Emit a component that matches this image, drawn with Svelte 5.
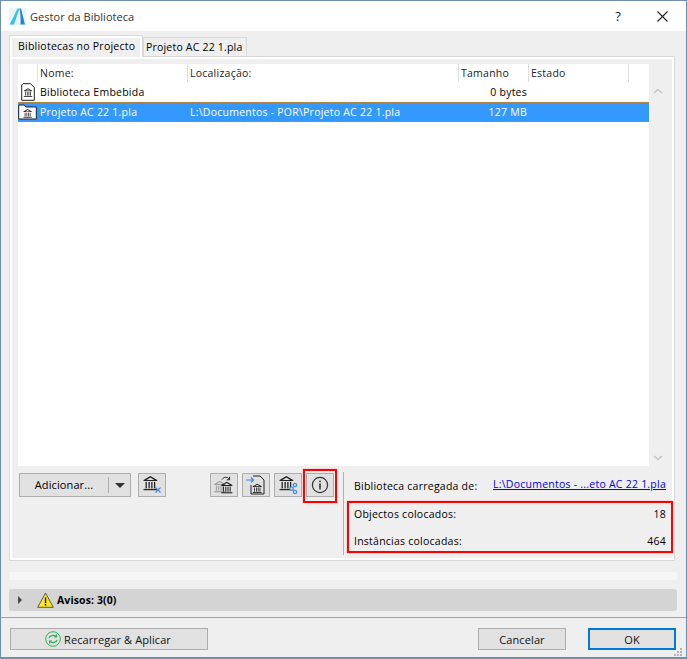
<script>
  const columns = ["Nome:", "Localização:", "Tamanho", "Estado", ""];
</script>

{#snippet bank(dim = false)}
  <g fill={dim ? "#9a9a9a" : "#222"}>
    <path d="M8 1 L14.5 4.8 V5.8 H1.5 V4.8 Z M8 2.4 L4.4 4.7 H11.6 Z" />
    <rect x="3.4" y="6.6" width="1.2" height="6" />
    <rect x="6.2" y="6.6" width="1.2" height="6" />
    <rect x="8.8" y="6.6" width="1.2" height="6" />
    <rect x="11.4" y="6.6" width="1.2" height="6" />
    <rect x="1.5" y="13.2" width="13" height="1.3" />
  </g>
{/snippet}

<div class="window">
  <header class="titlebar">
    <svg class="logo" width="17" height="17" viewBox="0 0 17 17">
      <rect x="0" y="0" width="17" height="17" fill="#e8f6fb" />
      <path d="M0.5 16.5 C4 11 6 5 8.5 0.5 H10.5 C8.5 6 6.5 12 5 16.5 Z" fill="#35c0ee" />
      <path d="M10.5 0.5 H12 L16 16.5 H11.5 C11.8 11 11.5 6 10.5 0.5 Z" fill="#2a86cc" />
    </svg>
    <span class="title">Gestor da Biblioteca</span>
    <span class="help">?</span>
    <svg class="close" width="11" height="11" viewBox="0 0 11 11">
      <path d="M0.5 0.5 L10.5 10.5 M10.5 0.5 L0.5 10.5" stroke="#222" stroke-width="1.1" fill="none" />
    </svg>
  </header>

  <div class="tabs">
    <div class="tab active">Bibliotecas no Projecto</div>
    <div class="tab">Projeto AC 22 1.pla</div>
  </div>

  <section class="panel">
    <div class="list">
      <div class="table">
        <div class="row head">
          <div></div>
          {#each columns as col}
            <div class="th">{col}</div>
          {/each}
        </div>
        <div class="row">
          <svg class="file" width="14" height="18" viewBox="0 0 14 18">
            <path d="M2 0.7 H9.5 L13.3 4.5 V17.3 H0.7 V2 Z" fill="#fff" stroke="#222" />
            <g transform="translate(1.9 4.6) scale(0.64)">{@render bank()}</g>
          </svg>
          <div class="cell">Biblioteca Embebida</div>
          <div class="cell"></div>
          <div class="cell num">0 bytes</div>
          <div class="cell"></div>
          <div class="cell"></div>
        </div>
        <div class="row selected">
          <svg class="file" width="19" height="16" viewBox="0 0 19 16">
            <path d="M0.7 2 V1 H6 L8 3 H18.3 V15 H0.7 Z" fill="#fff" stroke="#222" />
            <g transform="translate(4.5 4.4) scale(0.64)">{@render bank()}</g>
          </svg>
          <div class="cell">Projeto AC 22 1.pla</div>
          <div class="cell">L:\Documentos - POR\Projeto AC 22 1.pla</div>
          <div class="cell num">127 MB</div>
          <div class="cell"></div>
          <div class="cell"></div>
        </div>
      </div>
      <div class="scroll">
        <svg width="10" height="6" viewBox="0 0 10 6"><path d="M1 5 L5 1.5 L9 5" stroke="#c4c4c4" stroke-width="1.6" fill="none" /></svg>
        <svg width="10" height="6" viewBox="0 0 10 6"><path d="M1 1 L5 4.5 L9 1" stroke="#c4c4c4" stroke-width="1.6" fill="none" /></svg>
      </div>
    </div>

    <div class="lower">
      <div class="tools">
        <div class="split">
          <span class="split-label">Adicionar...</span>
          <span class="split-arrow"></span>
        </div>
        <button class="icon first" aria-label="Remover">
          <svg width="20" height="20" viewBox="0 0 20 20">
            <g transform="translate(0 0) scale(1.05)">{@render bank()}</g>
            <path d="M13.5 12.5 L18.5 17.5 M18.5 12.5 L13.5 17.5" stroke="#3b8ff0" stroke-width="1.3" />
          </svg>
        </button>
        <button class="icon second" aria-label="Recarregar">
          <svg width="22" height="20" viewBox="0 0 22 20">
            <g transform="translate(0 5) scale(0.85)">{@render bank(true)}</g>
            <g transform="translate(7 6) scale(0.85)">{@render bank()}</g>
            <path d="M9 4.5 C11 1.5 14.5 1.5 16.5 4.5 M16.6 1.8 V4.8 H13.8" stroke="#222" stroke-width="1" fill="none" />
          </svg>
        </button>
        <button class="icon" aria-label="Importar">
          <svg width="20" height="20" viewBox="0 0 20 20">
            <path d="M7 1 H14 L18 5 V19 H5 V10" fill="#e1e1e1" stroke="#222" />
            <g transform="translate(5.8 8) scale(0.68)">{@render bank()}</g>
            <path d="M0 5 H7.5 M5 2.5 L7.5 5 L5 7.5" stroke="#2f8cf0" stroke-width="1.2" fill="none" />
          </svg>
        </button>
        <button class="icon" aria-label="Partilhar">
          <svg width="20" height="20" viewBox="0 0 20 20">
            <g transform="scale(1.05)">{@render bank()}</g>
            <g fill="#e1e1e1" stroke="#3b8ff0" stroke-width="1.2">
              <circle cx="17" cy="10" r="1.7" />
              <circle cx="13.5" cy="13.5" r="1.7" />
              <circle cx="17" cy="17" r="1.7" />
            </g>
          </svg>
        </button>
        <button class="icon info" aria-label="Informação">
          <svg width="18" height="18" viewBox="0 0 18 18">
            <circle cx="9" cy="9" r="7.6" fill="none" stroke="#333" stroke-width="1.2" />
            <rect x="8.2" y="7.4" width="1.6" height="6" fill="#333" />
            <rect x="8.2" y="4.6" width="1.6" height="1.6" fill="#333" />
          </svg>
          <span class="mark"></span>
        </button>
      </div>

      <div class="details">
        <div class="source">
          <span>Biblioteca carregada de:</span>
          <span class="link">L:\Documentos - ...eto AC 22 1.pla</span>
        </div>
        <div class="stats">
          <div class="stat"><span>Objectos colocados:</span><span>18</span></div>
          <div class="stat"><span>Instâncias colocadas:</span><span>464</span></div>
        </div>
      </div>
    </div>
  </section>

  <div class="strip"></div>

  <div class="warnings">
    <span class="disclosure"></span>
    <svg width="17" height="16" viewBox="0 0 17 16">
      <path d="M8.5 1 L16.3 15.3 H0.7 Z" fill="#ffe816" stroke="#555" stroke-width="1" />
      <rect x="7.8" y="5.4" width="1.5" height="5.6" fill="#222" />
      <rect x="7.8" y="12" width="1.5" height="1.6" fill="#222" />
    </svg>
    <b>Avisos: 3(0)</b>
  </div>

  <footer class="footer">
    <button class="btn reload">
      <svg width="16" height="16" viewBox="0 0 16 16" fill="none" stroke="#2fb457">
        <circle cx="8" cy="8" r="7.3" />
        <path d="M4 7 C4.6 4.6 8.5 3.4 11 5.6 M11.4 3.6 V6 H9" stroke-width="1.2" />
        <path d="M12 9 C11.4 11.4 7.5 12.6 5 10.4 M4.6 12.4 V10 H7" stroke-width="1.2" />
      </svg>
      Recarregar &amp; Aplicar
    </button>
    <button class="btn cancel">Cancelar</button>
    <button class="btn ok">OK</button>
    <svg class="grip" width="9" height="9" viewBox="0 0 9 9" fill="#b4b4b4">
      <rect x="6" y="0" width="2" height="2" />
      <rect x="3" y="3" width="2" height="2" />
      <rect x="6" y="3" width="2" height="2" />
      <rect x="0" y="6" width="2" height="2" />
      <rect x="3" y="6" width="2" height="2" />
      <rect x="6" y="6" width="2" height="2" />
    </svg>
  </footer>
</div>

<style>
  :global(body) {
    margin: 0;
    background: #efefef;
  }

  .window {
    position: relative;
    box-sizing: border-box;
    width: 687px;
    height: 659px;
    display: flex;
    flex-direction: column;
    border: 1px solid #6f8fae;
    border-bottom-width: 2px;
    background: #efefef;
    color: #000;
    font-family: "Open Sans", "Noto Sans", sans-serif;
    font-size: 10.5px;
    letter-spacing: 0.24px;
  }

  .titlebar {
    height: 30px;
    flex: none;
    display: flex;
    align-items: center;
    background: #fff;
    padding-left: 8px;
    font-size: 11px;
    letter-spacing: 0.05px;
  }

  .title {
    margin-left: 4px;
    color: #333;
  }

  .help {
    margin-left: auto;
    font-size: 13px;
    margin-right: 36px;
    color: #222;
  }

  .close {
    margin-right: 18px;
  }

  .tabs {
    display: flex;
    align-items: flex-end;
    height: 22px;
    margin: 4px 0 0 8px;
    flex: none;
    position: relative;
    z-index: 1;
    margin-bottom: -1px;
  }

  .tab {
    height: 19px;
    line-height: 18px;
    padding: 0 2px;
    width: 104px;
    box-sizing: border-box;
    background: #efefef;
    border: 1px solid #d9d9d9;
    border-bottom: none;
    margin-bottom: 1px;
    white-space: nowrap;
    letter-spacing: 0.2px;
  }

  .tab.active {
    width: 134px;
    height: 22px;
    line-height: 20px;
    padding-left: 8px;
    box-shadow: inset 0 2px 0 #fff, inset 2px 0 0 #fff, inset -2px 0 0 #fff;
    margin-bottom: 0;
    letter-spacing: 0.24px;
  }

  .panel {
    margin: 0 11px 0 8px;
    height: 505px;
    flex: none;
    box-sizing: border-box;
    border: 1px solid #d9d9d9;
    box-shadow: inset 0 0 0 2px #fff;
    padding: 7px 8px 5px 8px;
    display: flex;
    flex-direction: column;
  }

  .list {
    height: 402px;
    flex: none;
    display: flex;
  }

  .table {
    width: 631px;
    background: #fff;
  }

  .row {
    display: grid;
    grid-template-columns: 19px 150px 271px 70px 100px 20px;
    height: 20px;
    align-items: center;
  }

  .head {
    height: 18px;
    background: #fff;
    width: 630px;
    align-items: stretch;
    color: #222;
  }

  .th {
    border-left: 1px solid #dedede;
    padding-left: 2px;
    line-height: 18px;
  }

  .cell {
    padding-left: 3px;
    white-space: nowrap;
  }

  .num {
    text-align: right;
    padding-right: 1px;
  }

  .file {
    justify-self: center;
  }

  .selected {
    box-sizing: border-box;
    background: #3399ff;
    color: #fff;
    border-top: 1px dotted #b98545;
    border-bottom: 1px dotted #b98545;
  }

  .scroll {
    width: 17px;
    padding: 24px 0 5px;
    display: flex;
    flex-direction: column;
    justify-content: space-between;
    align-items: center;
    box-sizing: border-box;
  }

  .lower {
    flex: 1;
    display: flex;
    min-height: 0;
  }

  .tools {
    width: 325px;
    flex: none;
    display: flex;
    align-items: flex-start;
    padding: 7px 0 0 1px;
    box-sizing: border-box;
  }

  .split {
    width: 112px;
    height: 24px;
    box-sizing: border-box;
    flex: none;
    display: flex;
    align-items: center;
    background: #e1e1e1;
    border: 1px solid #adadad;
    font-size: 11px;
    letter-spacing: 0.1px;
  }

  .split-label {
    width: 88px;
    text-align: center;
    border-right: 1px solid #adadad;
    line-height: 16px;
  }

  .split-arrow {
    margin-left: 6px;
    border-left: 5px solid transparent;
    border-right: 5px solid transparent;
    border-top: 5px solid #333;
  }

  .icon {
    position: relative;
    width: 28px;
    height: 24px;
    box-sizing: border-box;
    flex: none;
    margin: 0 0 0 4px;
    padding: 0;
    display: flex;
    align-items: center;
    justify-content: center;
    background: #e1e1e1;
    border: 1px solid #adadad;
  }

  .icon.first {
    margin-left: 7px;
  }

  .icon.second {
    margin-left: 44px;
  }

  .mark {
    position: absolute;
    top: -5px;
    bottom: -7px;
    left: -4px;
    right: -4px;
    border: 2px solid #f00;
    box-shadow: 0 0 1px #f66;
  }

  .details {
    flex: 1;
    margin-top: 6px;
    border-left: 1px solid #b0b0b0;
    display: flex;
    flex-direction: column;
  }

  .source {
    display: flex;
    justify-content: space-between;
    padding: 0 0 0 10px;
    height: 21px;
    align-items: flex-end;
    margin-bottom: 8px;
  }

  .link {
    color: #0000ee;
    text-decoration: underline;
    position: relative;
    top: -2px;
  }

  .stats {
    box-sizing: border-box;
    height: 52px;
    margin: 0 -7px 0 3px;
    padding: 0 5px;
    border: 2px solid #f00;
    box-shadow: 0 0 1px #f66;
    display: flex;
    flex-direction: column;
    justify-content: center;
    gap: 13px;
  }

  .stat {
    display: flex;
    justify-content: space-between;
  }

  .strip {
    height: 8px;
    flex: none;
    margin: 11px 9px 0 8px;
    background: #f6f6f6;
  }

  .warnings {
    height: 22px;
    flex: none;
    margin: 9px 9px 0 8px;
    background: #d4d4d4;
    border-radius: 3px;
    display: flex;
    align-items: center;
    padding-left: 9px;
    box-sizing: border-box;
  }

  .disclosure {
    border-left: 4px solid #444;
    border-top: 4px solid transparent;
    border-bottom: 4px solid transparent;
    margin-right: 15px;
  }

  .warnings b {
    margin-left: 3px;
    font-weight: 700;
    letter-spacing: 0.1px;
  }

  .footer {
    margin-top: 6px;
    border-top: 1px solid #a0a0a0;
    flex: 1;
    display: flex;
    align-items: flex-start;
    padding: 10px 0 0 9px;
    position: relative;
  }

  .btn {
    height: 22px;
    box-sizing: border-box;
    padding: 0;
    font: inherit;
    font-size: 11px;
    letter-spacing: 0.1px;
    color: #111;
    background: #e1e1e1;
    border: 1px solid #adadad;
    display: flex;
    align-items: center;
    justify-content: center;
    gap: 3px;
  }

  .reload {
    width: 198px;
    padding-right: 2px;
  }

  .cancel {
    width: 88px;
    margin-left: auto;
  }

  .ok {
    width: 88px;
    margin: 0 10px 0 22px;
    border: 2px solid #0078d7;
  }

  .grip {
    position: absolute;
    right: 3px;
    bottom: 0;
  }
</style>
